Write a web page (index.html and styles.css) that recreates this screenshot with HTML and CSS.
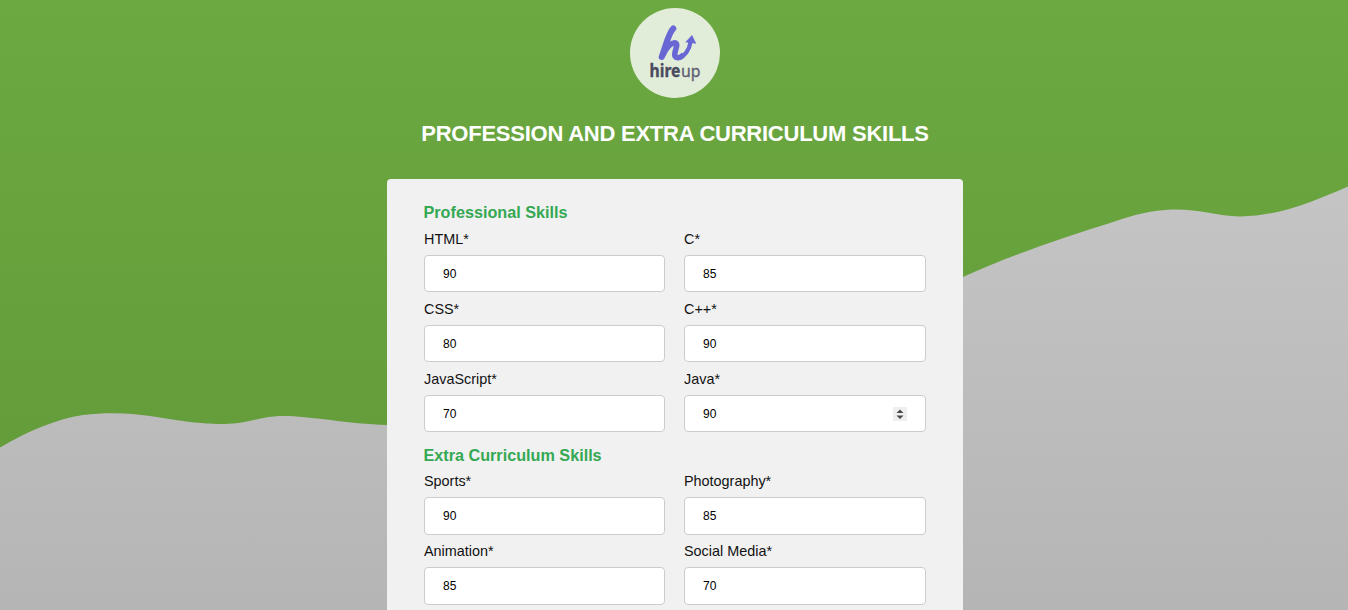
FILE: index.html
```html
<!DOCTYPE html>
<html lang="en">
<head>
<meta charset="utf-8">
<title>Hireup - Skills</title>
<link rel="stylesheet" href="styles.css">
</head>
<body>
<svg class="backdrop" viewBox="0 0 1348 610" preserveAspectRatio="none" aria-hidden="true">
  <defs>
    <linearGradient id="green" x1="0" y1="0" x2="0" y2="610" gradientUnits="userSpaceOnUse"><stop offset="0" stop-color="#6ca941"/><stop offset="1" stop-color="#619838"/></linearGradient>
    <linearGradient id="gray" x1="0" y1="0" x2="0" y2="610" gradientUnits="userSpaceOnUse"><stop offset="0" stop-color="#cbcbcb"/><stop offset="1" stop-color="#b5b5b5"/></linearGradient>
  </defs>
  <rect width="1348" height="610" fill="url(#green)"/>
  <path fill="url(#gray)" d="M0 447.500C30 430 57 419 83 415C108 412 133 413 157 417C187 422 204 424 224 424C247 424 256 418 274 416.500C300 414 344 424 387 425C620 433 800 350 963 277C1015 253 1075 234 1116 221C1134 215 1152 210 1172 209.500C1200 209 1216 216 1240 216.500C1278 216 1310 203 1348 186.500V610H0Z"/>
</svg>
<main class="page">
  <svg class="logo" viewBox="0 0 90 90" role="img" aria-label="hireup">
    <circle cx="45" cy="45" r="45" fill="#e1edd9"/>
    <g fill="none" stroke="#6967d3" stroke-linecap="round" stroke-linejoin="round">
      <path stroke-width="6" d="M43.300 20.500C38.500 25 36 37 31.700 49"/>
      <path stroke-width="5.600" d="M33 47C36 39 42 34 45.500 35C49 36.500 43.500 44 45 48C46.500 50.500 50 50 52 48"/>
      <path stroke-width="4.200" d="M48 49.500C55 48.500 59.500 41.500 60.500 34"/>
    </g>
    <path fill="#6967d3" d="M62 27L66.300 35.800L55.300 34.300Z"/>
    <text x="19.500" y="69.300" textLength="31" lengthAdjust="spacingAndGlyphs" class="logo-text logo-bold">hire</text>
    <text x="51" y="69.300" textLength="19.500" lengthAdjust="spacingAndGlyphs" class="logo-text">up</text>
  </svg>
  <h1 class="title">PROFESSION AND EXTRA CURRICULUM SKILLS</h1>
  <form class="card">
    <h2 class="section">Professional Skills</h2>
    <div class="grid">
      <label class="field">HTML*<input class="input" type="number" value="90"></label>
      <label class="field">C*<input class="input" type="number" value="85"></label>
      <label class="field">CSS*<input class="input" type="number" value="80"></label>
      <label class="field">C++*<input class="input" type="number" value="90"></label>
      <label class="field">JavaScript*<input class="input" type="number" value="70"></label>
      <label class="field">Java*
        <span class="stepper">
          <input class="input" type="number" value="90">
          <svg class="spin" viewBox="0 0 14 14" aria-hidden="true"><rect width="14" height="14" fill="#efefef"/><path fill="#484848" d="M7 2.500L10.500 6H3.500ZM7 12L3.500 8.500H10.500Z"/></svg>
        </span>
      </label>
    </div>
    <h2 class="section">Extra Curriculum Skills</h2>
    <div class="grid extra">
      <label class="field">Sports*<input class="input" type="number" value="90"></label>
      <label class="field">Photography*<input class="input" type="number" value="85"></label>
      <label class="field">Animation*<input class="input" type="number" value="85"></label>
      <label class="field">Social Media*<input class="input" type="number" value="70"></label>
    </div>
  </form>
</main>
</body>
</html>
```
FILE: styles.css
```css
* { box-sizing: border-box; }
html { overflow: hidden; }
body {
  margin: 0;
  height: 610px;
  overflow: hidden;
  font-family: "Liberation Sans", Arial, sans-serif;
  color: #111;
}
.backdrop {
  position: absolute;
  inset: 0;
  width: 100%;
  height: 100%;
  z-index: -1;
}
.page {
  display: flex;
  flex-direction: column;
  align-items: center;
  height: 610px;
  padding: 8px 0 0 2px;
}
.logo { width: 90px; height: 90px; flex: none; }
.logo-text { font: 400 17px "Noto Sans", sans-serif; fill: #5c5c72; stroke: #5c5c72; stroke-width: 0.300px; }
.logo-bold { font-weight: 700; fill: #4a4a5e; stroke: #4a4a5e; }
.title {
  margin: 24px 0 33px;
  font-size: 22px;
  line-height: 24px;
  font-weight: 700;
  letter-spacing: -0.240px;
  color: #fff;
  white-space: nowrap;
}
.card {
  width: 576px;
  flex: 1;
  padding: 24px 37px 0;
  border-radius: 4px 4px 0 0;
  background: #f1f1f1;
}
.section {
  margin: 0 0 10px -0.500px;
  font-size: 16.200px;
  line-height: 18px;
  color: #34a853;
}
.grid {
  display: grid;
  grid-template-columns: 241px 242px;
  column-gap: 19px;
  row-gap: 9px;
  margin-bottom: 14px;
}
.field {
  display: flex;
  flex-direction: column;
  gap: 7px;
  font-size: 14.400px;
  line-height: 17px;
}
.input {
  width: 100%;
  height: 37px;
  padding: 0 18px;
  border: 1px solid #ccc;
  border-radius: 4px;
  background: #fff;
  color: #000;
  font: 12px "Liberation Sans", Arial, sans-serif;
}
.input::-webkit-inner-spin-button { opacity: 0; }
.extra { margin-top: -1px; row-gap: 8px; }
.extra .input { height: 38px; padding-bottom: 1px; }
.stepper { position: relative; display: flex; }
.spin {
  position: absolute;
  right: 19px;
  top: 12px;
  width: 14px;
  height: 14px;
}
```
